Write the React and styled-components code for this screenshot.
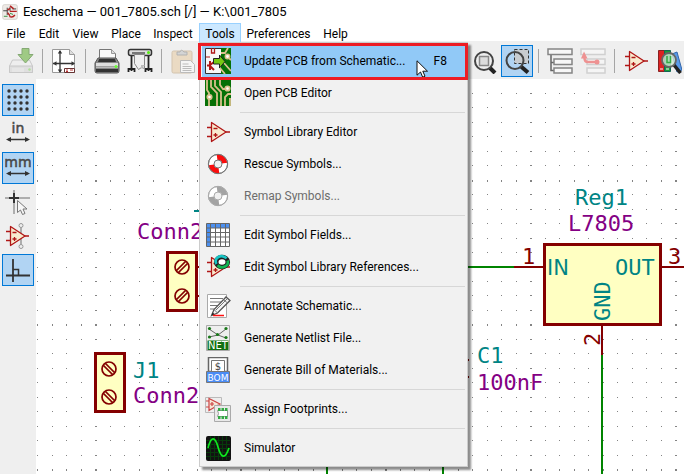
import React from 'react';
import styled, { createGlobalStyle } from 'styled-components';

const GlobalStyle = createGlobalStyle`
  * { box-sizing: border-box; }
  html, body, #root { height: 100%; }
  body { margin: 0; overflow: hidden; background: #fff; }
  body, button { font-family: Roboto, "Open Sans", sans-serif; font-size: 12px; color: #000; }
`;

const Window = styled.div`
  display: flex;
  flex-direction: column;
  height: 100vh;
  background: #fff;
`;

const TitleBar = styled.header`
  display: flex;
  align-items: center;
  gap: 5px;
  height: 23px;
  padding: 0 2px;
`;

const Title = styled.h1`
  margin: 0;
  font-size: 13px;
  font-weight: 400;
  line-height: 18px;
  white-space: nowrap;
`;

const MenuBar = styled.nav`
  display: grid;
  grid-template-columns: 32px 34px 39px 42px 52px 42px 75px 39px;
  height: 18px;
`;

const MenuSlot = styled.div`
  position: relative;
  display: flex;
`;

const MenuTitle = styled.button`
  flex: 1;
  padding: 2px 0 0;
  line-height: 16px;
  white-space: nowrap;
  border: 1px solid ${p => (p.$open ? '#99d1ff' : 'transparent')};
  background: ${p => (p.$open ? '#cce8ff' : 'transparent')};
`;

const Menu = styled.div`
  position: absolute;
  z-index: 2;
  top: 19px;
  left: 0;
  width: 269px;
  padding: 2px;
  border: 1px solid #ccc;
  background: #f1f1f1;
  box-shadow: 3px 3px 2px rgba(0, 0, 0, 0.45);
`;

const MenuItem = styled.button`
  display: grid;
  grid-template-columns: 38px 1fr auto;
  align-items: center;
  width: 100%;
  height: 32px;
  padding: 0 18px 0 0;
  border: 0;
  text-align: left;
  line-height: 16px;
  white-space: nowrap;
  background: ${p => (p.$active ? '#91c9f7' : 'transparent')};
  &:disabled { color: #6d6d6d; }
  svg { margin-left: 3px; }
`;

const MenuLabel = styled.span`
  padding-left: 4px;
`;

const Shortcut = styled.span`
  text-align: right;
`;

const MenuDivider = styled.hr`
  height: 1px;
  margin: 3px 0 3px 38px;
  border: 0;
  background: #d7d7d7;
`;

const Callout = styled.div`
  position: absolute;
  top: 0;
  left: -2px;
  right: -1px;
  height: 37px;
  border: 3px solid #ed1c24;
  pointer-events: none;
`;

const Pointer = styled.svg`
  position: absolute;
  top: 17px;
  left: 216px;
  pointer-events: none;
`;

const ToolBar = styled.div`
  display: flex;
  gap: 1px;
  height: 38px;
  padding: 4px 5px 2px;
  overflow: hidden;
  background: #efefef;
`;

const ViewTools = styled.div`
  display: flex;
  gap: 1px;
  margin-left: 268px;
`;

const ToolDivider = styled.span`
  flex: none;
  width: 1px;
  height: 24px;
  margin: 4px;
  background: #a5a5a5;
`;

const ToolButton = styled.button`
  display: flex;
  flex: none;
  align-items: center;
  justify-content: center;
  width: 32px;
  height: 32px;
  padding: 0;
  border: 1px solid ${p => (p.$on ? '#0078d7' : 'transparent')};
  background: ${p => (p.$on ? '#b1d4f3' : 'transparent')};
`;

const Body = styled.div`
  display: flex;
  flex: 1;
  min-height: 0;
`;

const SideBar = styled.aside`
  display: flex;
  flex: none;
  flex-direction: column;
  gap: 2px;
  width: 36px;
  padding: 5px 2px;
  background: #efefef;
`;

const Canvas = styled.main`
  flex: 1;
  min-width: 0;
  overflow: hidden;
`;

const Sheet = styled.svg`
  display: block;
  width: 100%;
  height: 100%;
  font-family: "DejaVu Sans Mono", monospace;
  font-size: 22px;
`;

const Icon = ({ children, size = 26 }) => (
  <svg width={size} height={size} viewBox="0 0 26 26" fill="none" aria-hidden="true">{children}</svg>
);

/* ---------- icons ---------- */

const opAmp = (
  <g stroke="#b01616" strokeWidth="1.3">
    <path d="M2 8.5h5M2 17.5h5M20 13h5" />
    <path d="M6.5 3.5v19L21 13z" fill="#f8ebcf" strokeLinejoin="round" />
    <path d="M8.5 9.5h4M8.5 16h4M10.5 14v4" />
  </g>
);
const OpAmpIcon = () => <Icon>{opAmp}</Icon>;

const AppIcon = () => (
  <Icon size={16}>
    <rect x="1" y="1" width="24" height="24" rx="3" fill="#eeeae6" stroke="#c9c5c0" />
    <path d="M2 11h7M8.500 6v12M13 5v7M17 8h6" stroke="#3a3a3a" strokeWidth="1.500" />
    <path d="M9 10l4-3M9 14l4 5M13 12h11M13 3l6 5M12 20q5 3 9-2" stroke="#b42222" strokeWidth="2.400" />
    <path d="M13 15l5 2M3 20h6" stroke="#2f8f3a" strokeWidth="1.500" />
  </Icon>
);

const SaveIcon = () => (
  <Icon>
    <g opacity="0.45">
      <path d="M4.500 12h17l3 6v6.500h-23V18z" fill="#eee" stroke="#999" />
      <path d="M1.500 18h23v6.500h-23z" fill="#ccc" stroke="#999" />
      <path d="M4 21h12M4 23h12" stroke="#eee" />
      <circle cx="21.500" cy="21.500" r="1.200" fill="#6c3" />
    </g>
    <path d="M14 .5h7v6h4L17.500 15 10 6.500h4z" fill="#9fca84" stroke="#85a974" />
  </Icon>
);

const PageIcon = () => (
  <Icon>
    <path d="M1.500 1.500h17l5 5v18h-22z" fill="#fff" stroke="#999" />
    <path d="M18.500 1.500v5h5" fill="#ddd" stroke="#999" />
    <path d="M9 3v21M2 15.500h21" stroke="#333" strokeWidth="1.300" />
    <path d="M6.800 5.500L9 2l2.200 3.500zM6.800 21.500L9 25l2.200-3.500zM5.500 13.300L2 15.500l3.500 2.200zM20.500 13.300l3.500 2.200-3.500 2.200z" fill="#333" />
    <path d="M13.500 20.500h10v4h-10z" fill="#fff" stroke="#633" />
    <path d="M15 22h2M19 22h3M15 23.500h2" stroke="#b33" />
  </Icon>
);

const PrinterIcon = () => (
  <Icon>
    <path d="M5.500 12V1.500h12l4 4V12z" fill="#fafafa" stroke="#777" />
    <path d="M17.500 1.500v4h4" stroke="#999" fill="#ddd" />
    <path d="M4 10h18l3 5v8q0 2-2 2H3q-2 0-2-2v-8z" fill="#888" stroke="#555" />
    <path d="M5 11h16l1 3H4z" fill="#333" />
    <path d="M2 15h22v3H2z" fill="#ddd" />
    <path d="M2 18.500h22v1.500H2z" fill="#bbb" />
    <path d="M2 21h22v3H2z" fill="#333" />
    <circle cx="22" cy="18.500" r="1.500" fill="#6f3" />
  </Icon>
);

const PlotterIcon = () => (
  <Icon>
    <path d="M4.500 7v16M21.500 7v16M1.500 24V21h6v3M18.500 24v-3h6v3" stroke="#222" strokeWidth="1.800" />
    <rect x="1.500" y="1.500" width="23" height="6" rx="2" fill="#ddd" stroke="#333" strokeWidth="1.500" />
    <path d="M5 5h13" stroke="#555" strokeWidth="1.500" />
    <path d="M7.500 6.500h10v14l-3-1-3 2-4-6z" fill="#eee" stroke="#888" />
    <path d="M14 21v-4h4z" fill="#bbb" />
    <circle cx="21.500" cy="4.500" r="1.500" fill="#5e1" />
  </Icon>
);

const PasteIcon = () => (
  <Icon>
    <g opacity="0.5">
      <rect x="2" y="3" width="20" height="22" rx="1.500" fill="#e6c699" stroke="#b99a70" />
      <path d="M7 7V4h3q1-3.500 4 0h3v3z" fill="#bbb" stroke="#777" />
    </g>
    <path d="M10.500 12.500h10l4 4v8h-14z" fill="#f5f5f5" stroke="#bbb" />
    <path d="M12.500 16h6M12.500 18.500h9M12.500 20.500h9M12.500 22.500h9" stroke="#bbb" />
  </Icon>
);

const ZoomFitIcon = () => (
  <Icon>
    <path d="M19 20l5 5" stroke="#222" strokeWidth="4" />
    <circle cx="13" cy="13" r="9" stroke="#444" strokeWidth="2" />
    <rect x="8.500" y="8.500" width="9" height="9" fill="#ddd" stroke="#888" strokeWidth="1.500" />
  </Icon>
);

const ZoomAreaIcon = () => (
  <Icon>
    <rect x="10.500" y="1.500" width="14" height="14" fill="#c8ccd0" stroke="#333" strokeDasharray="3 2" />
    <path d="M17 18.500l7 6" stroke="#222" strokeWidth="4" />
    <circle cx="11" cy="12.500" r="8.500" stroke="#444" strokeWidth="2" />
  </Icon>
);

const TreeIcon = () => (
  <Icon>
    <path d="M4 7v15.500h4M4 14.500h4" stroke="#666" strokeWidth="1.500" />
    <g fill="#f7f7f7" stroke="#858585" strokeWidth="1.500">
      <rect x="1" y="1" width="24" height="5.500" />
      <rect x="7" y="11" width="18" height="5.500" />
      <rect x="7" y="20" width="18" height="5" />
    </g>
  </Icon>
);

const LeaveSheetIcon = () => (
  <Icon>
    <g fill="#f5f5f5" stroke="#d0d0d0" strokeWidth="1.500">
      <rect x="1" y="1" width="24" height="5.500" />
      <rect x="7" y="11" width="18" height="5.500" />
      <rect x="7" y="20" width="18" height="5" />
    </g>
    <path d="M17 14H8q-3.500 0-3.500-4V8" stroke="#ee9292" strokeWidth="2.500" />
    <circle cx="17" cy="14" r="2.500" fill="#ee9292" />
    <path d="M1 10.500L4 3.500l3.500 7z" fill="#ee9292" />
  </Icon>
);

const LibraryIcon = () => (
  <Icon>
    <path d="M2.500 2.500h6v21h-6z" fill="#d22" stroke="#822" />
    <path d="M8.500 2.500h6v21h-6z" fill="#1a9a38" stroke="#165" />
    <path d="M16 6l5-2 5 18-5 2z" fill="#5a9bea" stroke="#36a" />
    <path d="M4 21h3M10 21h3" stroke="#fff" />
    <path d="M18 17l6.500 8" stroke="#222" strokeWidth="3.500" />
    <circle cx="13" cy="12" r="7" fill="#cfe9d4" fillOpacity=".8" stroke="#666" strokeWidth="1.800" />
    <path d="M11 8v6.500h3.500V8" stroke="#3a4" strokeWidth="1.500" />
  </Icon>
);

const GridIcon = () => (
  <Icon>
    {[4, 10, 16, 22].map(y => [4, 10, 16, 22].map(x => (
      <circle key={x + '-' + y} cx={x} cy={y} r="1.700" fill="#333" />
    )))}
  </Icon>
);

const UnitIcon = ({ label }) => (
  <Icon>
    <text x="13" y="12" textAnchor="middle" fontFamily="DejaVu Sans" fontSize="14" fill="#484848" stroke="#484848" strokeWidth=".5">{label}</text>
    <path d="M3 18.500h20" stroke="#333" strokeWidth="1.500" />
    <path d="M1 18.500l5-2.600v5.200zM25 18.500l-5-2.600v5.200z" fill="#333" />
  </Icon>
);

const CursorShapeIcon = () => (
  <Icon>
    <path d="M0 9h25M9 1v24" stroke="#999" strokeWidth="1.500" />
    <path d="M4 9h10M9 4v10" stroke="#333" strokeWidth="2" />
    <path d="M12.500 11.500v12l3-2.500 2 4.500 2.500-1-2-4.500h4z" fill="#f6f6f6" stroke="#777" />
  </Icon>
);

const HiddenPinsIcon = () => (
  <Icon>
    <path d="M16 3v20" stroke="#999" strokeWidth="1.500" />
    <g fill="#eee" stroke="#999"><circle cx="16" cy="2.500" r="2" /><circle cx="16" cy="23.500" r="2" /></g>
    <g transform="translate(-1 0)">{opAmp}</g>
  </Icon>
);

const OrthoIcon = () => (
  <Icon>
    <path d="M1 18.500h24M8 2v23" stroke="#333" strokeWidth="1.800" />
    <path d="M8 12.500h5.500v6" stroke="#333" strokeWidth="1.500" />
  </Icon>
);

const UpdatePcbIcon = () => (
  <Icon>
    <path d="M.5.5h16v25H.5z" fill="#f7f7f7" stroke="#333" />
    <path d="M16 0h10v26H16z" fill="#067006" />
    <path d="M16 5l4 0 3-5M24 10l2 2M15 20l5 6M19 15l7 8" stroke="#d9c08c" strokeWidth="1.800" />
    <circle cx="22.500" cy="8.500" r="2.200" fill="#fff" stroke="#d9c08c" strokeWidth="1.500" />
    <path d="M1 9h4" stroke="#b01616" />
    <path d="M6.500 0v5h3V0" stroke="#b01616" strokeWidth="1.300" />
    <path d="M5 13v9M5 17l4-3M5 18l4 4M2 17.500h3" stroke="#b01616" strokeWidth="2" />
    <path d="M8.500 10.500h6V7l5.500 6.500-5.500 6.500v-4h-6z" fill="#76c913" stroke="#222" />
  </Icon>
);

const PcbIcon = () => (
  <Icon>
    <path d="M0 0h26v26H0z" fill="#067006" />
    <g stroke="#d9c08c" strokeWidth="1.800">
      <path d="M2 0v10l2 3v4M6 0v7l6 6v13M10 0v6l6 6v14M15 0v5l3 4h3M26 14h-3l-3 3v9M25 18v8M4 19v7" />
      <circle cx="22.500" cy="8.500" r="2.200" fill="#fff" />
      <circle cx="4.500" cy="17" r="2.200" fill="#fff" />
    </g>
  </Icon>
);

const BuoyIcon = ({ color, edge }) => (
  <Icon>
    <circle cx="13" cy="13" r="9.500" fill="#fff" stroke={edge} />
    <path d="M13 3.500a9.500 9.500 0 0 1 9.500 9.500H13zM13 22.500a9.500 9.500 0 0 1-9.500-9.500H13z" fill={color} transform="rotate(-8 13 13)" />
    <circle cx="13" cy="13" r="9.700" stroke={edge} />
    <circle cx="13" cy="13" r="4" fill="#f1f1f1" stroke={edge} />
  </Icon>
);

const TableIcon = () => (
  <Icon>
    <path d="M1.500 1.500h23v23h-23z" fill="#fff" />
    <path d="M1.500 1.500h23v4.500h-23zM1.500 1.500h4v23h-4z" fill="#4c90f0" />
    <path d="M1.500 1.500h23v23h-23zM5.500 2v22M10.500 2v22M15.500 2v22M20.500 2v22M2 6h22M2 10.500h22M2 15h22M2 20h22" stroke="#666" />
  </Icon>
);

const RefsIcon = () => (
  <Icon>
    {opAmp}
    <ellipse cx="17" cy="8" rx="5.800" ry="5" fill="#fff" stroke="#222" strokeWidth="4.600" />
    <path d="M11.500 10a5.800 5 0 0 1 10-5.500" stroke="#19c3c3" strokeWidth="2.800" />
    <path d="M22.600 6.500a5.800 5 0 0 1-10 4.800" stroke="#10b450" strokeWidth="2.800" />
  </Icon>
);

const AnnotateIcon = () => (
  <Icon>
    <path d="M2.500 1.500h19v23h-19z" fill="#fff" stroke="#aaa" />
    <path d="M5 5.500h13M5 9h11M5 12.500h8M5 16h5" stroke="#777" strokeWidth="1.200" />
    <path d="M6.500 22.500l2.500-6L21 4l4 3.500L12.500 20z" fill="#f5f5f5" stroke="#555" strokeWidth="1.300" />
    <path d="M9 16.500l3.500 3.500M11 17L22 6M18.500 6.500l4 3.500" stroke="#777" />
    <path d="M6.500 22.500l3-1.300-1.700-1.700z" fill="#222" />
    <path d="M8 22.500h11" stroke="#f11" strokeWidth="1.500" />
  </Icon>
);

const NetlistIcon = () => (
  <Icon>
    <path d="M1.500 .5h23v25h-23z" fill="#eee" stroke="#aaa" />
    <path d="M4 4l9 6 8-6M4 12l9-2 8 3" stroke="#666" />
    <g fill="#187818"><circle cx="4.500" cy="3.500" r="1.600" /><circle cx="21" cy="3.500" r="1.600" /><circle cx="12.500" cy="9.500" r="1.600" /><circle cx="4.500" cy="12" r="1.600" /><circle cx="21" cy="12.500" r="1.600" /></g>
    <path d="M2.500 15.500h21v9.500h-21z" fill="#127112" />
    <text x="13" y="24" textAnchor="middle" fontFamily="DejaVu Sans" fontSize="10" fill="#fff">NET</text>
  </Icon>
);

const BomIcon = () => (
  <Icon>
    <path d="M3.500 .5h19v14h-19z" fill="#fff" stroke="#666" strokeWidth="1.500" />
    <path d="M6.500 3.500h13v11h-13z" fill="#fff" stroke="#777" />
    <text x="13" y="12.500" textAnchor="middle" fontFamily="DejaVu Sans" fontSize="10" fill="#444">$</text>
    <path d="M1.500 14.500h23v11h-23z" fill="#4b8cf5" stroke="#777" />
    <text x="13" y="23.500" textAnchor="middle" fontFamily="DejaVu Sans" fontSize="9" fill="#fff">BOM</text>
  </Icon>
);

const FootprintIcon = () => (
  <Icon>
    <path d="M.5 1.500h16v15H.5z" fill="#eee" stroke="#bbb" />
    <path d="M1 5h3M1 11h3M4 2.500v12L15 8zM7 6v4M5 8h4" stroke="#c44" strokeWidth="1.200" fill="#f7e6d6" />
    <path d="M9.500 9.500h16v16h-16z" fill="#e9e9e9" stroke="#aaa" />
    <path d="M12.500 14.500h10v6h-10q2-3 0-6z" fill="#fff" stroke="#999" />
    <path d="M13 13.500h10M13 21.500h10" stroke="#3a4" strokeWidth="3" strokeDasharray="2.500 1" />
  </Icon>
);

const SimIcon = () => (
  <Icon>
    <rect x="1" y="1" width="25" height="25" rx="2" fill="#111" />
    <path d="M5.500 1v24M9.500 1v24M13.500 1v24M17.500 1v24M21.500 1v24M1 5.500h24M1 9.500h24M1 13.500h24M1 17.500h24M1 21.500h24" stroke="#063b0b" />
    <path d="M3 13C6 1 10 1 13 12S20 25 24 13" stroke="#0fe71f" strokeWidth="1.700" />
  </Icon>
);

/* ---------- data ---------- */

const toolsMenu = [
  [
    { label: 'Update PCB from Schematic...', icon: <UpdatePcbIcon />, shortcut: 'F8', active: true },
    { label: 'Open PCB Editor', icon: <PcbIcon /> },
  ],
  [
    { label: 'Symbol Library Editor', icon: <OpAmpIcon /> },
    { label: 'Rescue Symbols...', icon: <BuoyIcon color="#fa0d0d" edge="#777" /> },
    { label: 'Remap Symbols...', icon: <BuoyIcon color="#a3a3a3" edge="#aaa" />, disabled: true },
  ],
  [
    { label: 'Edit Symbol Fields...', icon: <TableIcon /> },
    { label: 'Edit Symbol Library References...', icon: <RefsIcon /> },
  ],
  [
    { label: 'Annotate Schematic...', icon: <AnnotateIcon /> },
    { label: 'Generate Netlist File...', icon: <NetlistIcon /> },
    { label: 'Generate Bill of Materials...', icon: <BomIcon /> },
  ],
  [{ label: 'Assign Footprints...', icon: <FootprintIcon /> }],
  [{ label: 'Simulator', icon: <SimIcon /> }],
];

const menuTitles = ['File', 'Edit', 'View', 'Place', 'Inspect', 'Tools', 'Preferences', 'Help'];

const sideTools = [
  { name: 'Show grid', icon: <GridIcon />, on: true },
  { name: 'Inches', icon: <UnitIcon label="in" /> },
  { name: 'Millimeters', icon: <UnitIcon label="mm" />, on: true },
  { name: 'Cursor shape', icon: <CursorShapeIcon /> },
  { name: 'Hidden pins', icon: <HiddenPinsIcon /> },
  { name: 'Right-angle wires', icon: <OrthoIcon />, on: true },
];

/* ---------- parts ---------- */

const ToolsMenu = () => (
  <Menu role="menu">
    {toolsMenu.map((group, i) => (
      <React.Fragment key={i}>
        {i > 0 && <MenuDivider />}
        {group.map(item => (
          <MenuItem key={item.label} role="menuitem" disabled={item.disabled} $active={item.active}>
            {item.icon}
            <MenuLabel>{item.label}</MenuLabel>
            {item.shortcut && <Shortcut>{item.shortcut}</Shortcut>}
          </MenuItem>
        ))}
      </React.Fragment>
    ))}
    <Pointer width="13" height="18" viewBox="0 0 13 18">
      <path d="M1 .8v14.400l3.500-3.200 2.200 5.200 2.300-1-2.200-5h4.700z" fill="#fff" stroke="#111" />
    </Pointer>
    <Callout />
  </Menu>
);

const Tool = ({ name, icon, on }) => (
  <ToolButton aria-label={name} title={name} $on={on}>{icon}</ToolButton>
);

const Screw = ({ x, y, flip }) => (
  <g transform={`translate(${x} ${y}) scale(${flip ? -1 : 1} 1)`} stroke="#840000" strokeWidth="1.700" fill="none">
    <circle r="7" />
    <path d="M-5.500 3.500L3.500-5.500M-3.500 5.500L5.500-3.500" />
  </g>
);

const GridDots = () => {
  const dots = [];
  for (let row = 0; row < 70; row += 1) {
    for (let col = 0; col < 110; col += 1) {
      const x = Math.round(37 + col * 14.5);
      const y = Math.round(93 + row * 14.46);
      const w = col % 10 === 4 ? 2 : 1;
      const h = row % 10 === 6 ? 2 : 1;
      dots.push(`M${x} ${y}h${w}v${h}h-${w}z`);
    }
  }
  return <path d={dots.join('')} fill="#848484" shapeRendering="crispEdges" />;
};

const Schematic = () => (
  <Sheet aria-label="Schematic">
    <g transform="translate(-36 -79)">
      <GridDots />
      <g stroke="#840000" strokeWidth="3" fill="#ffffc2">
        <path d="M167.500 252.500h29v58h-29z" />
        <path d="M95.500 353.500h29v58h-29z" />
        <path d="M544.500 244.500h116v80h-116z" />
      </g>
      <Screw x={182} y={267} />
      <Screw x={182} y={296} />
      <Screw x={109} y={369} flip />
      <Screw x={109} y={397} flip />
      <g strokeWidth="2" fill="none">
        <path d="M198 267h20M198 296h20M514 267h29M662 267h90M602 326v29M440 360h29M440 377h29" stroke="#840000" />
        <path d="M440 267h74M602 355v900M327 440v800M443 440v800" stroke="#008400" />
        <path d="M194 211h12" stroke="#008484" />
      </g>
      <g fill="#008484">
        <text x="133" y="378">J1</text>
        <text x="477" y="363">C1</text>
        <text x="575" y="205">Reg1</text>
        <text x="547" y="275" fontFamily="DejaVu Sans" fontSize="21">IN</text>
        <text x="615" y="275">OUT</text>
        <text transform="translate(610 321) rotate(-90)">GND</text>
      </g>
      <g fill="#840084">
        <text x="137" y="239">Conn2</text>
        <text x="133" y="403">Conn2</text>
        <text x="568" y="231">L7805</text>
        <text x="477" y="390">100nF</text>
      </g>
      <g fill="#840000">
        <text x="522" y="264">1</text>
        <text x="668" y="264">3</text>
        <text transform="translate(600 346) rotate(-90)">2</text>
      </g>
    </g>
  </Sheet>
);

export default function App() {
  return (
    <Window>
      <GlobalStyle />
      <TitleBar>
        <AppIcon />
        <Title>Eeschema — 001_7805.sch [/] — K:\001_7805</Title>
      </TitleBar>
      <MenuBar>
        {menuTitles.map(name => (
          <MenuSlot key={name}>
            <MenuTitle $open={name === 'Tools'}>{name}</MenuTitle>
            {name === 'Tools' && <ToolsMenu />}
          </MenuSlot>
        ))}
      </MenuBar>
      <ToolBar>
        <Tool name="Save" icon={<SaveIcon />} />
        <ToolDivider />
        <Tool name="Page settings" icon={<PageIcon />} />
        <ToolDivider />
        <Tool name="Print" icon={<PrinterIcon />} />
        <Tool name="Plot" icon={<PlotterIcon />} />
        <ToolDivider />
        <Tool name="Paste" icon={<PasteIcon />} />
        <ViewTools>
          <Tool name="Zoom to fit" icon={<ZoomFitIcon />} />
          <Tool name="Zoom to selection" icon={<ZoomAreaIcon />} on />
          <ToolDivider />
          <Tool name="Navigate hierarchy" icon={<TreeIcon />} />
          <Tool name="Leave sheet" icon={<LeaveSheetIcon />} />
          <ToolDivider />
          <Tool name="Symbol editor" icon={<OpAmpIcon />} />
          <Tool name="Browse libraries" icon={<LibraryIcon />} />
        </ViewTools>
      </ToolBar>
      <Body>
        <SideBar>
          {sideTools.map(tool => <Tool key={tool.name} {...tool} />)}
        </SideBar>
        <Canvas><Schematic /></Canvas>
      </Body>
    </Window>
  );
}
